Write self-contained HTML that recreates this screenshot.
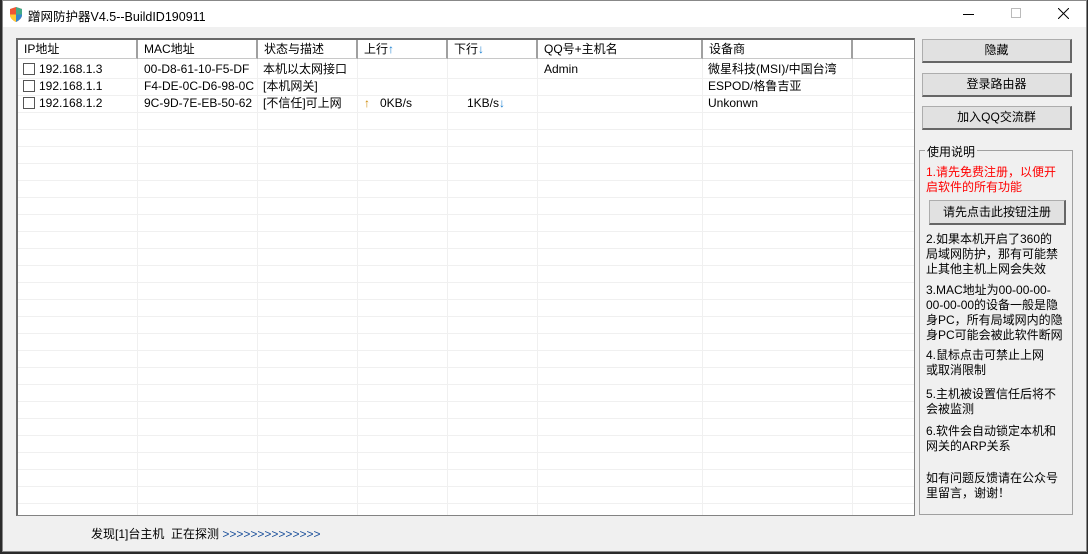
<!DOCTYPE html><html><head><meta charset="utf-8"><style>
*{margin:0;padding:0;box-sizing:border-box}
body{width:1088px;height:554px;background:#2b2b2b;position:relative;overflow:hidden;font-family:"Liberation Sans","Noto Sans CJK SC",sans-serif;font-size:12px;color:#000}
.win{position:absolute;left:2px;top:0;width:1085px;height:552px;background:#f0f0f0;border:1px solid #888}
.title{position:absolute;left:0;top:0;width:100%;height:26px;background:#fff}
.abs{position:absolute;white-space:nowrap}
.list{position:absolute;left:13px;top:37px;width:899px;height:478px;background:#fff;border:1px solid #828282;border-left:2px solid #696969;border-top:2px solid #696969;overflow:hidden}
.hdr{position:absolute;top:0;height:19px;background:#fff;border-right:2px solid #a0a0a0;border-bottom:1px solid #c8c8c8;padding-left:6px;line-height:19px;font-size:12px}
.vl{position:absolute;top:19px;bottom:0;width:1px;background:#f0f0f0}
.hl{position:absolute;left:0;right:0;height:1px;background:#f0f0f0}
.cell{position:absolute;line-height:16px;font-size:12px}
.cb{display:inline-block;width:12px;height:12px;border:1px solid #555;vertical-align:-2px;margin-right:4px;background:#fff}
.btn{position:absolute;background:#e1e1e1;border:1px solid #adadad;border-right:2px solid #666;border-bottom:2px solid #666;text-align:center;font-size:12px}
.grp{position:absolute;left:916px;top:149px;width:154px;height:365px;border:1px solid #a0a0a0}
.p{position:absolute;left:6px;font-size:12px;line-height:15px;white-space:nowrap}
</style></head><body>
<div class="win">
<div class="title">
<svg class="abs" style="left:6px;top:6px" width="14" height="15" viewBox="0 0 14 15"><path d="M7 0L13 2V8C13 11 10 13.5 7 15C4 13.5 1 11 1 8V2Z" fill="#e53"/><path d="M7 0L13 2V7.5H7Z" fill="#4a8"/><path d="M1 7.5H7V15C4 13.5 1 11 1 8Z" fill="#fc3"/><path d="M7 7.5H13V8C13 11 10 13.5 7 15Z" fill="#38c"/></svg>
<div class="abs" style="left:25px;top:5px;font-size:12.5px">蹭网防护器V4.5--BuildID190911</div>
<div class="abs" style="left:960px;top:13px;width:11px;height:1px;background:#000"></div>
<div class="abs" style="left:1008px;top:7px;width:10px;height:10px;border:1px solid #bbb"></div>
<svg class="abs" style="left:1055px;top:7px" width="11" height="11"><path d="M0 0L11 11M11 0L0 11" stroke="#000" stroke-width="1"/></svg>
</div>
<div class="list">
<div class="hdr" style="left:0;width:120px">IP地址</div>
<div class="hdr" style="left:120px;width:120px">MAC地址</div>
<div class="hdr" style="left:240px;width:100px">状态与描述</div>
<div class="hdr" style="left:340px;width:90px">上行<span style="color:#1a7fd0">↑</span></div>
<div class="hdr" style="left:430px;width:90px">下行<span style="color:#1a7fd0">↓</span></div>
<div class="hdr" style="left:520px;width:165px">QQ号+主机名</div>
<div class="hdr" style="left:685px;width:150px">设备商</div>
<div class="hdr" style="left:835px;width:70px;border-right:none"></div>
<div class="vl" style="left:119px"></div><div class="vl" style="left:239px"></div><div class="vl" style="left:339px"></div><div class="vl" style="left:429px"></div><div class="vl" style="left:519px"></div><div class="vl" style="left:684px"></div><div class="vl" style="left:834px"></div>
<div class="hl" style="top:38px"></div><div class="hl" style="top:55px"></div><div class="hl" style="top:72px"></div><div class="hl" style="top:89px"></div><div class="hl" style="top:106px"></div><div class="hl" style="top:123px"></div><div class="hl" style="top:140px"></div><div class="hl" style="top:157px"></div><div class="hl" style="top:174px"></div><div class="hl" style="top:191px"></div><div class="hl" style="top:208px"></div><div class="hl" style="top:225px"></div><div class="hl" style="top:242px"></div><div class="hl" style="top:259px"></div><div class="hl" style="top:276px"></div><div class="hl" style="top:293px"></div><div class="hl" style="top:310px"></div><div class="hl" style="top:327px"></div><div class="hl" style="top:344px"></div><div class="hl" style="top:361px"></div><div class="hl" style="top:378px"></div><div class="hl" style="top:395px"></div><div class="hl" style="top:412px"></div><div class="hl" style="top:429px"></div><div class="hl" style="top:446px"></div><div class="hl" style="top:463px"></div>
<div class="cell" style="left:5px;top:21px"><span class="cb"></span>192.168.1.3</div>
<div class="cell" style="left:126px;top:21px">00-D8-61-10-F5-DF</div>
<div class="cell" style="left:245px;top:21px">本机以太网接口</div>
<div class="cell" style="left:526px;top:21px">Admin</div>
<div class="cell" style="left:690px;top:21px">微星科技(MSI)/中国台湾</div>
<div class="cell" style="left:5px;top:38px"><span class="cb"></span>192.168.1.1</div>
<div class="cell" style="left:126px;top:38px">F4-DE-0C-D6-98-0C</div>
<div class="cell" style="left:245px;top:38px">[本机网关]</div>
<div class="cell" style="left:690px;top:38px">ESPOD/格鲁吉亚</div>
<div class="cell" style="left:5px;top:55px"><span class="cb"></span>192.168.1.2</div>
<div class="cell" style="left:126px;top:55px">9C-9D-7E-EB-50-62</div>
<div class="cell" style="left:245px;top:55px">[不信任]可上网</div>
<div class="cell" style="left:346px;top:55px"><span style="color:#c80">↑</span>&nbsp;&nbsp;&nbsp;0KB/s</div>
<div class="cell" style="left:449px;top:55px">1KB/s<span style="color:#1a7fd0">↓</span></div>
<div class="cell" style="left:690px;top:55px">Unkonwn</div>
</div>
<div class="btn" style="left:919px;top:38px;width:150px;height:24px;line-height:21px">隐藏</div>
<div class="btn" style="left:919px;top:72px;width:150px;height:24px;line-height:21px">登录路由器</div>
<div class="btn" style="left:919px;top:105px;width:150px;height:24px;line-height:21px">加入QQ交流群</div>
<div class="grp">
<div class="abs" style="left:5px;top:-8px;background:#f0f0f0;padding:0 2px">使用说明</div>
<div class="p" style="top:14px;color:#f00">1.请先免费注册，以便开<br>启软件的所有功能</div>
<div class="btn" style="left:9px;top:49px;width:137px;height:25px;line-height:22px">请先点击此按钮注册</div>
<div class="p" style="top:81px">2.如果本机开启了360的<br>局域网防护，那有可能禁<br>止其他主机上网会失效</div>
<div class="p" style="top:132px">3.MAC地址为00-00-00-<br>00-00-00的设备一般是隐<br>身PC，所有局域网内的隐<br>身PC可能会被此软件断网</div>
<div class="p" style="top:197px">4.鼠标点击可禁止上网<br>或取消限制</div>
<div class="p" style="top:236px">5.主机被设置信任后将不<br>会被监测</div>
<div class="p" style="top:273px">6.软件会自动锁定本机和<br>网关的ARP关系</div>
<div class="p" style="top:320px">如有问题反馈请在公众号<br>里留言，谢谢！</div>
</div>
<div class="abs" style="left:88px;top:524px">发现[1]台主机&nbsp;&nbsp;正在探测 <span style="color:#1a4f9a">&gt;&gt;&gt;&gt;&gt;&gt;&gt;&gt;&gt;&gt;&gt;&gt;&gt;&gt;</span></div>
</div>
</body></html>
